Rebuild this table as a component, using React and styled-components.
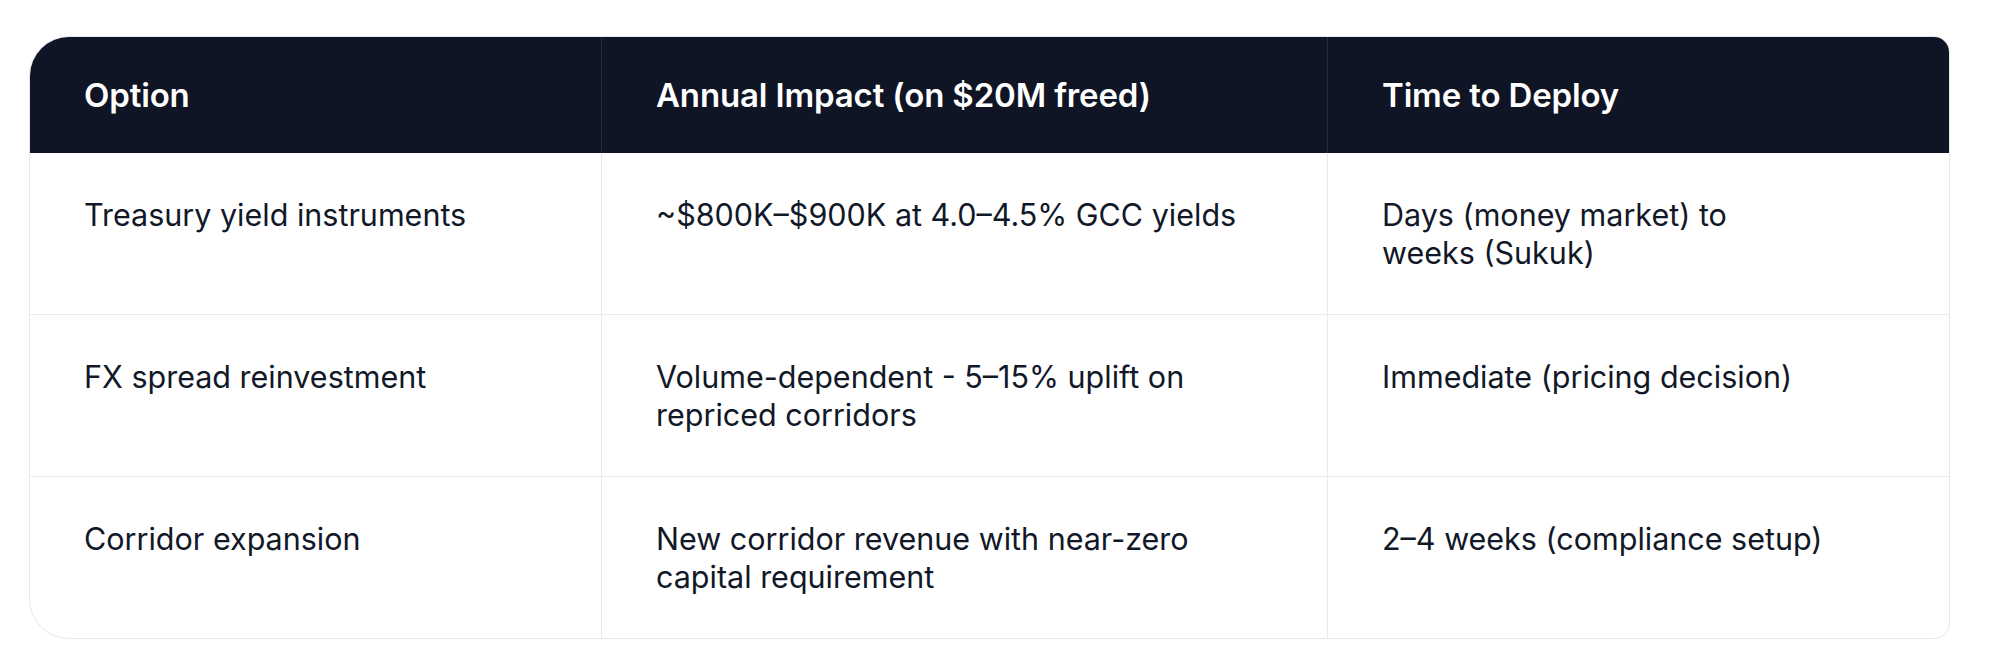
import React from "react";
import styled, { createGlobalStyle } from "styled-components";

const Global = createGlobalStyle`
  html, body { margin: 0; padding: 0; background: #ffffff; }
  body { font-family: Inter, "Noto Sans", sans-serif; -webkit-font-smoothing: antialiased; }
`;

const Page = styled.div`
  padding: 36px 54px 32px 29px;
`;

const Frame = styled.div`
  width: 1921px;
  box-sizing: border-box;
  border: 1px solid #e5e7eb;
  border-radius: 40px 16px 16px 40px;
  overflow: hidden;
  display: grid;
  grid-template-columns: 571px 726px 622px;
`;

const HeadCell = styled.div`
  background: #0f1524;
  color: #ffffff;
  font-size: 33px;
  font-weight: 600;
  line-height: 38px;
  letter-spacing: -0.15px;
  padding: 39px 54px;
  border-left: ${(p) => (p.$first ? "none" : "1px solid #232a3a")};
`;

const BodyCell = styled.div`
  color: #111827;
  font-size: 30.5px;
  font-weight: 400;
  line-height: 38px;
  letter-spacing: 0;
  padding: 43px 54px 42px;
  border-left: ${(p) => (p.$first ? "none" : "1px solid #e9e9ee")};
  border-top: ${(p) => (p.$topLine ? "1px solid #e9e9ee" : "none")};
`;

const Line = styled.span`
  display: block;
  white-space: nowrap;
`;

const headers = ["Option", "Annual Impact (on $20M freed)", "Time to Deploy"];

const rows = [
  [
    ["Treasury yield instruments"],
    ["~$800K–$900K at 4.0–4.5% GCC yields"],
    ["Days (money market) to", "weeks (Sukuk)"],
  ],
  [
    ["FX spread reinvestment"],
    ["Volume-dependent - 5–15% uplift on", "repriced corridors"],
    ["Immediate (pricing decision)"],
  ],
  [
    ["Corridor expansion"],
    ["New corridor revenue with near-zero", "capital requirement"],
    ["2–4 weeks (compliance setup)"],
  ],
];

export default function App() {
  return (
    <Page>
      <Global />
      <Frame>
        {headers.map((h, i) => (
          <HeadCell key={h} $first={i === 0}>
            {h}
          </HeadCell>
        ))}
        {rows.map((row, r) =>
          row.map((cell, c) => (
            <BodyCell key={`${r}-${c}`} $first={c === 0} $topLine={r > 0}>
              {cell.map((l) => (
                <Line key={l}>{l}</Line>
              ))}
            </BodyCell>
          ))
        )}
      </Frame>
    </Page>
  );
}
